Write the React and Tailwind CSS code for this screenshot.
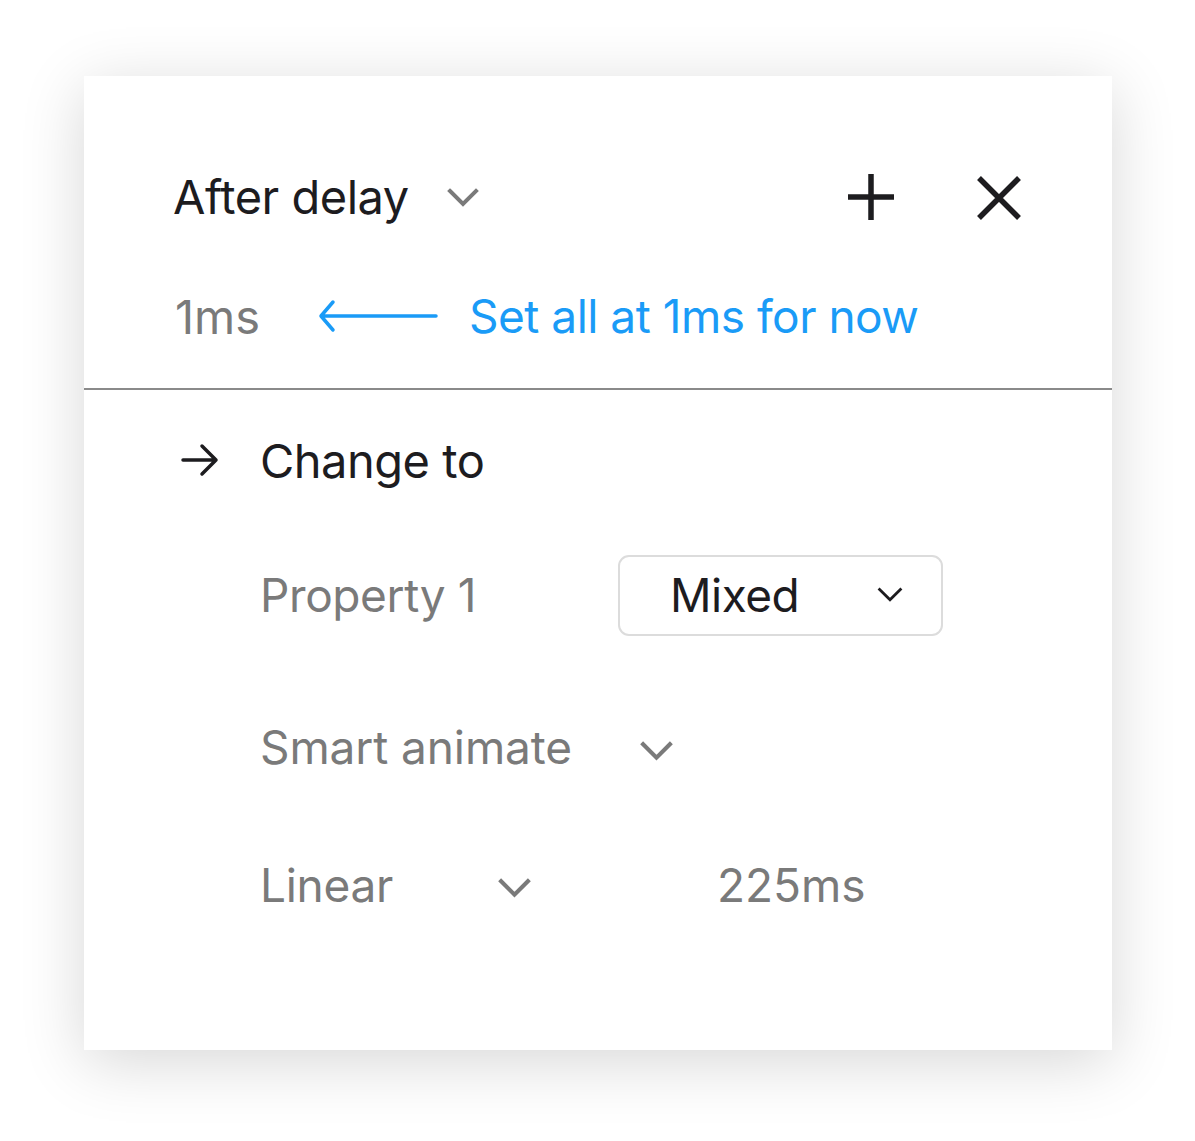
import React from "react";

const Chevron = ({ className, stroke = "#7a7a7a", sw = 4 }) => (
  <svg viewBox="0 0 32 20" className={className} fill="none">
    <path d="M3 3 L16 16 L29 3" stroke={stroke} strokeWidth={sw} strokeLinecap="square" strokeLinejoin="miter" />
  </svg>
);

export default function App() {
  return (
    <div className="w-[1195px] h-[1141px] bg-white pt-[76px] pl-[84px]" style={{ fontFamily: "Inter, 'Noto Sans', sans-serif" }}>
      <div className="w-[1028px] h-[974px] bg-white shadow-[0_12px_60px_rgba(0,0,0,0.16)] flex flex-col">
        {/* top section */}
        <div className="pl-[89px] pr-[90px] pt-[90px] h-[314px] border-b-2 border-[#8a8a8a] flex flex-col">
          <div className="h-[60px] flex items-center">
            <span className="text-[47px] leading-none tracking-[-0.5px] text-[#1d1c1f]">After delay</span>
            <Chevron className="w-[32px] h-[20px] ml-[38px] mt-[4px]" />
            <div className="flex-1" />
            <svg viewBox="0 0 48 48" className="w-[48px] h-[48px] mr-[81px] mt-[2px]" fill="none">
              <path d="M24 1 V47 M1 24 H47" stroke="#1d1c1f" strokeWidth="5.5" />
            </svg>
            <svg viewBox="0 0 46 46" className="w-[46px] h-[46px] mt-[4px]" fill="none">
              <path d="M3 3 L43 43 M43 3 L3 43" stroke="#1d1c1f" strokeWidth="5.5" />
            </svg>
          </div>
          <div className="h-[60px] mt-[60px] flex items-center">
            <span className="text-[47px] leading-none tracking-[0px] text-[#7a7a7a] w-[145px] pl-[2px]">1ms</span>
            <svg viewBox="0 0 120 34" className="w-[120px] h-[34px]" fill="none">
              <path d="M3 17 H118 M15 3 L3 17 L15 31" stroke="#1a9bf7" strokeWidth="3.5" strokeLinecap="round" strokeLinejoin="round" />
            </svg>
            <span className="ml-[31px] text-[46px] leading-none tracking-[-0.5px] text-[#1a9bf7]">Set all at 1ms for now</span>
          </div>
        </div>
        {/* bottom section */}
        <div className="pl-[97px] pt-[40px] flex flex-col">
          <div className="h-[60px] flex items-center">
            <svg viewBox="0 0 38 34" className="w-[38px] h-[34px]" fill="none">
              <path d="M2 17 H35 M21 3 L35 17 L21 31" stroke="#1d1c1f" strokeWidth="3.5" strokeLinecap="round" strokeLinejoin="round" />
            </svg>
            <span className="ml-[41px] text-[47px] leading-none tracking-[-0.5px] text-[#1d1c1f]">Change to</span>
          </div>
          <div className="pl-[79px] flex flex-col">
            <div className="mt-[65px] h-[80px] flex items-center">
              <span className="w-[358px] text-[46px] leading-none tracking-[-0.4px] text-[#7a7a7a]">Property 1</span>
              <div className="w-[325px] h-[81px] border-2 border-[#dcdcdc] rounded-[11px] flex items-center pl-[50px] pr-[38px]">
                <span className="text-[46px] leading-none tracking-[-0.5px] text-[#1d1c1f]">Mixed</span>
                <div className="flex-1" />
                <Chevron className="w-[26px] h-[16px]" stroke="#1d1c1f" sw={3.5} />
              </div>
            </div>
            <div className="mt-[82px] h-[60px] flex items-center">
              <span className="text-[46px] leading-none tracking-[-0.1px] text-[#7a7a7a]">Smart animate</span>
              <Chevron className="w-[33px] h-[21px] ml-[68px] mt-[8px]" />
            </div>
            <div className="mt-[78px] h-[60px] flex items-center">
              <span className="w-[238px] text-[46px] leading-none tracking-[-0.3px] text-[#7a7a7a]">Linear</span>
              <Chevron className="w-[33px] h-[21px] mt-[6px]" />
              <span className="ml-[186px] text-[46px] leading-none tracking-[0px] text-[#7a7a7a]">225ms</span>
            </div>
          </div>
        </div>
      </div>
    </div>
  );
}
